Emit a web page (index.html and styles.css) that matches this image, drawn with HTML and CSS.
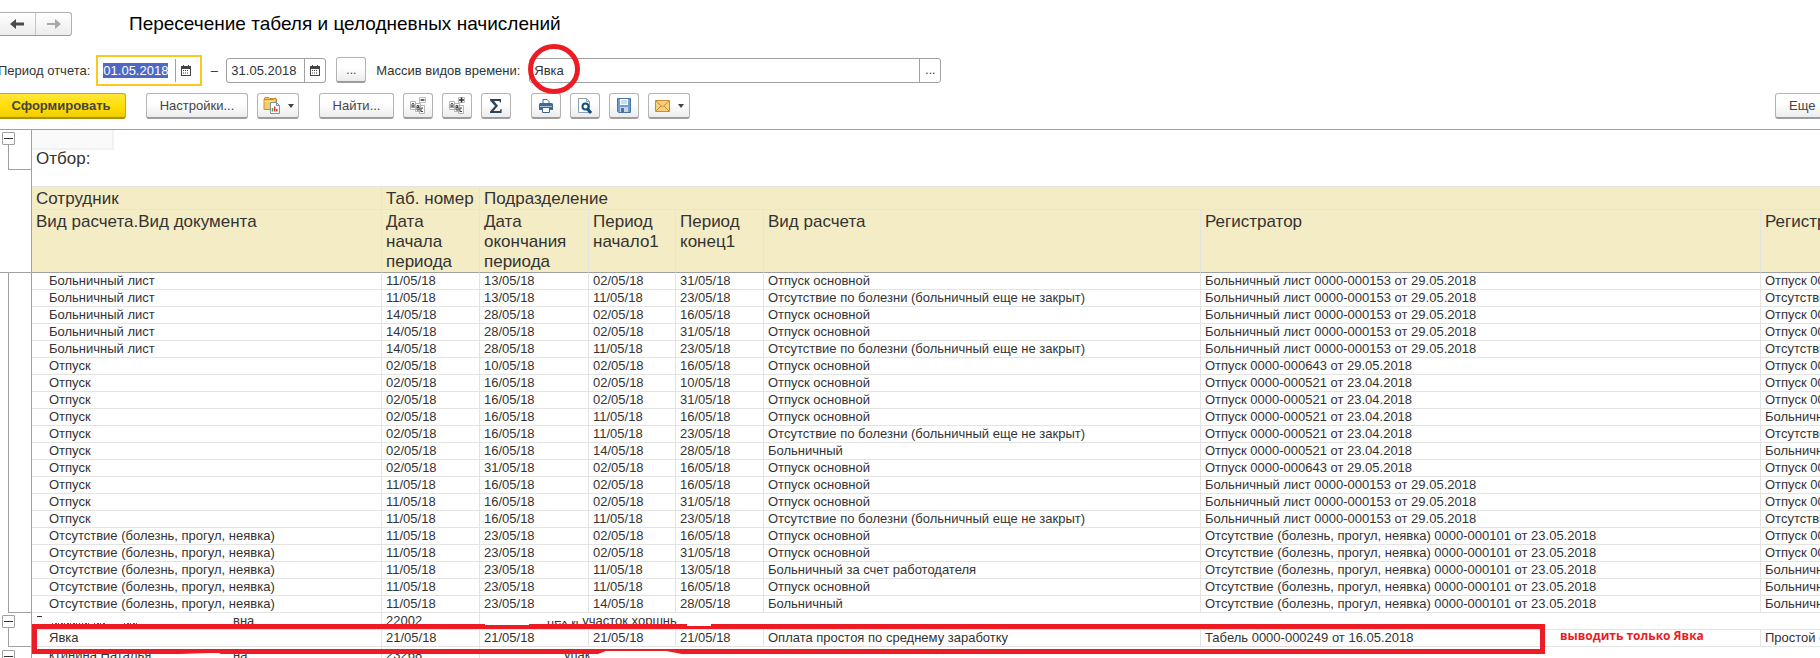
FILE: index.html
```
<!DOCTYPE html>
<html lang="ru">
<head>
  <meta charset="UTF-8">
  <meta name="viewport" content="width=device-width, initial-scale=1.0">
  <title>Пересечение табеля и целодневных начислений</title>
  <link rel="stylesheet" href="styles.css">
</head>
<body>

  <header class="title-bar">
    <div class="nav">
      <button type="button" aria-label="Назад">
        <svg width="14" height="12" viewBox="0 0 14 12"><path d="M0 6l6-5v3.500h8v3H6V11z" fill="#4a4a4a"/></svg>
      </button>
      <button type="button" aria-label="Вперед">
        <svg width="14" height="12" viewBox="0 0 14 12"><path d="M14 6L8 1v4H0v2h8v4z" fill="#a9a9a9"/></svg>
      </button>
    </div>
    <h1>Пересечение табеля и целодневных начислений</h1>
  </header>

  <div class="params">
    <label for="date-from">Период отчета:</label>
    <div class="field date active">
      <input id="date-from" type="text" value="01.05.2018">
      <button type="button" aria-label="Выбрать дату начала">
        <svg width="10" height="11" viewBox="0 0 10 11"><path d="M0 1h10v10H0z" fill="#444"/><path d="M1 4h8v6H1z" fill="#fff"/><path d="M2 0h1v2H2zM7 0h1v2H7z" fill="#444"/><path d="M2 5.500h6M2 8h6" stroke="#444" stroke-dasharray="1 1"/></svg>
      </button>
    </div>
    <label class="dash" for="date-to">–</label>
    <div class="field date">
      <input id="date-to" type="text" value="31.05.2018">
      <button type="button" aria-label="Выбрать дату окончания">
        <svg width="10" height="11" viewBox="0 0 10 11"><path d="M0 1h10v10H0z" fill="#444"/><path d="M1 4h8v6H1z" fill="#fff"/><path d="M2 0h1v2H2zM7 0h1v2H7z" fill="#444"/><path d="M2 5.500h6M2 8h6" stroke="#444" stroke-dasharray="1 1"/></svg>
      </button>
    </div>
    <button type="button" class="btn icon dots">...</button>
    <label class="kinds-label" for="kinds">Массив видов времени:</label>
    <div class="field kinds">
      <input id="kinds" type="text" value="Явка">
      <button type="button" class="dots">...</button>
      <svg class="circle" width="52" height="50" viewBox="0 0 52 50"><ellipse cx="26" cy="25" rx="23.500" ry="22.500" fill="none" stroke="#ed1c24" stroke-width="5"/></svg>
    </div>
  </div>

  <div class="toolbar">
    <div class="group">
      <button type="button" class="btn primary">Сформировать</button>
    </div>
    <div class="group">
      <button type="button" class="btn settings">Настройки...</button>
      <button type="button" class="btn menu" aria-label="Варианты отчета">
        <svg width="17" height="17" viewBox="0 0 17 17"><path d="M1 2.500l1-2h4l1 1h6v4M1 2.500h9l2-1.500 1.500 1v9l-2 1.500H1z" fill="#f3cd6c" stroke="#c58f2c"/><path d="M1.500 4.500h9v8" fill="none" stroke="#fbe6a8"/><path d="M7.500 5.500h6l3 3v8h-9z" fill="#fff" stroke="#7d8fa0"/><path d="M13.500 5.500v3h3" fill="none" stroke="#7d8fa0"/><path d="M9.500 11v3.500" stroke="#3aa655" stroke-width="1.500"/><path d="M11.700 9.500v5" stroke="#e8322b" stroke-width="1.500"/><path d="M13.800 12v2.500" stroke="#e8322b" stroke-width="1.500"/></svg>
        <svg width="6" height="4" viewBox="0 0 6 4"><path d="M0 0h6L3 4z" fill="#444"/></svg>
      </button>
    </div>
    <div class="group">
      <button type="button" class="btn find">Найти...</button>
      <button type="button" class="btn icon" aria-label="Свернуть группы">
        <svg width="16" height="17" viewBox="0 0 16 17"><path d="M.5 4.500h5v8h-5zM5.500 6.500h5v8h-5zM9.500 8.500h5v8h-5z" fill="#fff" stroke="#b4b4b4"/><path d="M2 11V7.500l1-1.500 1 1.500V11M2 9h2M7 13V8.500h1.500v2H7h2V13H7M13 11h-2v3.500h2" fill="none" stroke="#444"/><path d="M9.500.5h6v5h-6z" fill="#fff" stroke="#bbb"/><path d="M10.500 3h4" stroke="#333" stroke-width="1.500"/></svg>
      </button>
      <button type="button" class="btn icon" aria-label="Развернуть группы">
        <svg width="16" height="17" viewBox="0 0 16 17"><path d="M.5 4.500h5v8h-5zM5.500 6.500h5v8h-5zM9.500 8.500h5v8h-5z" fill="#fff" stroke="#b4b4b4"/><path d="M2 11V7.500l1-1.500 1 1.500V11M2 9h2M7 13V8.500h1.500v2H7h2V13H7M13 11h-2v3.500h2" fill="none" stroke="#444"/><path d="M9.500.5h6v5h-6z" fill="#fff" stroke="#bbb"/><path d="M10 3h5M12.500.5v5" stroke="#333" stroke-width="1.500"/></svg>
      </button>
      <button type="button" class="btn icon" aria-label="Сумма">
        <svg width="12" height="14" viewBox="0 0 12 14"><path d="M0 0h11v3.500h-1L9.500 2H4l4 4.800L3.500 12H10l.6-2h1v4H0v-1.500L5 7 0 1.500z" fill="#2e4559"/></svg>
      </button>
    </div>
    <div class="group">
      <button type="button" class="btn icon" aria-label="Печать">
        <svg width="14" height="14" viewBox="0 0 14 14"><path d="M4 5V.5h4l2 2V5" fill="#fff" stroke="#3b6588"/><path d="M1 4h12l1 1v6H0V5z" fill="#3f6c92"/><path d="M1 7.500h12" stroke="#a9c4da"/><path d="M3.500 8.500h7v5h-7z" fill="#fff" stroke="#3b6588"/></svg>
      </button>
      <button type="button" class="btn icon" aria-label="Предварительный просмотр">
        <svg width="14" height="16" viewBox="0 0 14 16"><path d="M.5.5h8l3 3v11H.5z" fill="#fff" stroke="#8fa1b0"/><path d="M8.500.5v3h3" fill="none" stroke="#8fa1b0"/><circle cx="7.500" cy="8.500" r="3" fill="#fff" stroke="#14507f" stroke-width="2"/><path d="M9.500 11l3.500 4" stroke="#14507f" stroke-width="3"/></svg>
      </button>
      <button type="button" class="btn icon" aria-label="Сохранить">
        <svg width="14" height="15" viewBox="0 0 14 15"><path d="M.5.5h13v14h-12l-1-1z" fill="#6f9fd0" stroke="#4775a3"/><path d="M3 1h8v6H3z" fill="#fff"/><path d="M4 3h6M4 5h6" stroke="#9bb8d4"/><path d="M3 9h8v5H3z" fill="#c9d3dc"/><path d="M4 10h3v4H4z" fill="#4775a3"/></svg>
      </button>
      <button type="button" class="btn menu" aria-label="Отправить по почте">
        <svg width="15" height="12" viewBox="0 0 15 12"><path d="M.5.5h14v11H.5z" fill="#f7cf80" stroke="#c98d2b"/><path d="M1 1l6.500 6L14 1M1 11l5-5M14 11L9 6" fill="none" stroke="#c98d2b"/></svg>
        <svg width="6" height="4" viewBox="0 0 6 4"><path d="M0 0h6L3 4z" fill="#444"/></svg>
      </button>
    </div>
    <button type="button" class="btn more">Еще</button>
  </div>

  <main class="report">
    <div class="tree">
      <div class="tree-head">
        <button type="button" class="toggle" aria-label="Свернуть отбор"></button>
        <div class="branch"></div>
      </div>
      <div class="branch long"></div>
      <button type="button" class="toggle" aria-label="Свернуть сотрудника"></button>
      <div class="branch short"></div>
      <button type="button" class="toggle" aria-label="Свернуть сотрудника"></button>
    </div>

    <div class="sheet">
      <div class="filter">
        <div class="active-cell"></div>
        <p>Отбор:</p>
      </div>
      <table>
        <colgroup>
          <col class="c-name"><col class="c-start"><col class="c-end"><col class="c-p1">
          <col class="c-p2"><col class="c-kind"><col class="c-reg"><col>
        </colgroup>
        <thead>
          <tr class="h-top"><th>Сотрудник</th><th>Таб. номер</th><th colspan="6">Подразделение</th></tr>
          <tr class="h-main">
            <th>Вид расчета.Вид документа</th>
            <th>Дата<br>начала<br>периода</th>
            <th>Дата<br>окончания<br>периода</th>
            <th>Период<br>начало1</th>
            <th>Период<br>конец1</th>
            <th>Вид расчета</th>
            <th>Регистратор</th>
            <th>Регистратор1</th>
          </tr>
        </thead>
        <tbody id="rows"></tbody>
        <tbody>
          <tr class="person">
            <td>
              <svg class="scrap" width="110" height="12" viewBox="0 0 110 12"><path d="M1 1.500h5" stroke="#333"/><path d="M16 9h28M46 9h8M58 9h12M72 10h6M88 9h14" stroke="#555" stroke-width="2" stroke-dasharray="1 2 2 1"/></svg>
              <span class="name-end">вна</span>
            </td>
            <td>22002</td>
            <td colspan="6" class="dept"><span class="wiped">цех и</span> <span class="cut">участок</span> <span class="cut">хоршнь</span></td>
          </tr>
          <tr>
            <td class="marked">Явка
              <svg class="frame" width="1513" height="30" viewBox="0 0 1513 30">
                <path d="M2.500 2.500h1508v25H2.500z" fill="none" stroke="#ed1c24" stroke-width="5"/>
                <path d="M453 0h44v1h-44zM655 0h24v2h-24zM147 30l30-1h10l2 1zM566 30l8-3h60l16 3z" fill="#fff"/>
              </svg>
              <strong class="note">выводить только Явка</strong>
            </td>
            <td>21/05/18</td><td>21/05/18</td><td>21/05/18</td><td>21/05/18</td>
            <td>Оплата простоя по среднему заработку</td>
            <td>Табель 0000-000249 от 16.05.2018</td>
            <td>Простой сотрудника</td>
          </tr>
          <tr class="person">
            <td>ктинина Наталья<span class="name-end">на</span></td>
            <td>23268</td>
            <td colspan="6"><span class="pack">упак</span></td>
          </tr>
        </tbody>
      </table>
    </div>
  </main>

  <script>
    const B = 'Больничный лист';
    const O = 'Отпуск';
    const N = 'Отсутствие (болезнь, прогул, неявка)';
    const main = 'Отпуск основной';
    const sick = 'Отсутствие по болезни (больничный еще не закрыт)';
    const b153 = 'Больничный лист 0000-000153 от 29.05.2018';
    const o643 = 'Отпуск 0000-000643 от 29.05.2018';
    const o521 = 'Отпуск 0000-000521 от 23.04.2018';
    const n101 = N + ' 0000-000101 от 23.05.2018';

    const rows = [
      [B, '11/05/18', '13/05/18', '02/05/18', '31/05/18', main, b153, o643],
      [B, '11/05/18', '13/05/18', '11/05/18', '23/05/18', sick, b153, n101],
      [B, '14/05/18', '28/05/18', '02/05/18', '16/05/18', main, b153, o521],
      [B, '14/05/18', '28/05/18', '02/05/18', '31/05/18', main, b153, o643],
      [B, '14/05/18', '28/05/18', '11/05/18', '23/05/18', sick, b153, n101],
      [O, '02/05/18', '10/05/18', '02/05/18', '16/05/18', main, o643, o521],
      [O, '02/05/18', '16/05/18', '02/05/18', '10/05/18', main, o521, o643],
      [O, '02/05/18', '16/05/18', '02/05/18', '31/05/18', main, o521, o643],
      [O, '02/05/18', '16/05/18', '11/05/18', '16/05/18', main, o521, b153],
      [O, '02/05/18', '16/05/18', '11/05/18', '23/05/18', sick, o521, n101],
      [O, '02/05/18', '16/05/18', '14/05/18', '28/05/18', 'Больничный', o521, b153],
      [O, '02/05/18', '31/05/18', '02/05/18', '16/05/18', main, o643, o521],
      [O, '11/05/18', '16/05/18', '02/05/18', '16/05/18', main, b153, o521],
      [O, '11/05/18', '16/05/18', '02/05/18', '31/05/18', main, b153, o643],
      [O, '11/05/18', '16/05/18', '11/05/18', '23/05/18', sick, b153, n101],
      [N, '11/05/18', '23/05/18', '02/05/18', '16/05/18', main, n101, o521],
      [N, '11/05/18', '23/05/18', '02/05/18', '31/05/18', main, n101, o643],
      [N, '11/05/18', '23/05/18', '11/05/18', '13/05/18', 'Больничный за счет работодателя', n101, b153],
      [N, '11/05/18', '23/05/18', '11/05/18', '16/05/18', main, n101, b153],
      [N, '11/05/18', '23/05/18', '14/05/18', '28/05/18', 'Больничный', n101, b153]
    ];

    document.getElementById('rows').innerHTML = rows
      .map(r => '<tr>' + r.map(c => `<td>${c}</td>`).join('') + '</tr>')
      .join('');

    // the first date is ready for typing
    const dateFrom = document.getElementById('date-from');
    dateFrom.focus();
    dateFrom.select();
  </script>

</body>
</html>
```
FILE: styles.css
```
* {
  margin: 0;
  padding: 0;
  box-sizing: border-box;
}

body {
  font-family: "Liberation Sans", Arial, sans-serif;
  font-size: 13px;
  color: #333;
  background: #fff;
  height: 100vh;
  overflow: hidden;
}

button,
input {
  font: inherit;
  color: inherit;
}

svg {
  display: block;
}

/* Title */
.title-bar {
  display: flex;
  align-items: center;
  gap: 57px;
  height: 47px;
}

.nav {
  display: flex;
  margin-left: -2px;
  border: 1px solid #b0b0b0;
  border-bottom-color: #999;
  border-radius: 3px;
  background: linear-gradient(#fff, #ececec);
}

.nav button {
  display: flex;
  align-items: center;
  justify-content: center;
  width: 36px;
  height: 22px;
  border: none;
  background: none;
}

.nav button + button {
  border-left: 1px solid #c4c4c4;
}

h1 {
  font-size: 19px;
  font-weight: normal;
  color: #000;
}

/* Report parameters */
.params {
  display: flex;
  align-items: center;
  height: 46px;
  margin-left: -2px;
}

.field {
  display: flex;
  height: 25px;
  border: 1px solid #a0a0a0;
  border-radius: 3px;
  background: #fff;
}

.field input {
  flex: 1;
  min-width: 0;
  border: none;
  outline: none;
  background: none;
  padding-left: 4px;
}

.field input::selection {
  background: #4f68c4;
  color: #fff;
}

.field button {
  display: flex;
  align-items: center;
  justify-content: center;
  width: 21px;
  border: none;
  border-left: 1px solid #a0a0a0;
  background: none;
}

.date {
  width: 100px;
}

.date.active {
  width: 106px;
  height: 31px;
  margin-left: 6px;
  padding: 2px 1px 2px 0;
  border: 2px solid #fcc81e;
  border-radius: 0;
}

.date.active input {
  padding-left: 5px;
}

.date.active button {
  width: 24px;
  padding-right: 4px;
}

.dash {
  width: 24px;
  text-align: center;
}

.params .btn {
  margin: 0 10px;
}

.kinds-label {
  width: 153px;
}

.kinds {
  position: relative;
  width: 412px;
}

.circle {
  position: absolute;
  left: -2px;
  top: -15px;
}

/* Buttons */
.btn {
  height: 26px;
  border: 1px solid #b4b4b4;
  border-bottom: 2px solid #9c9c9c;
  border-radius: 3px;
  background: linear-gradient(#fff 40%, #ececec);
  color: #444;
  white-space: nowrap;
}

.btn.icon,
.btn.menu {
  display: flex;
  align-items: center;
  justify-content: center;
  width: 30px;
}

.btn.menu {
  width: 42px;
  gap: 8px;
}

.dots {
  font-size: 12px;
}

.toolbar {
  display: flex;
  gap: 20px;
  height: 36px;
}

.group {
  display: flex;
  gap: 9px;
}

.primary {
  width: 130px;
  margin-left: -4px;
  border-color: #c9ae00 #c9ae00 #a89200;
  background: linear-gradient(#ffe63c, #ffdd00 60%, #f0cc00);
  font-weight: bold;
}

.settings {
  width: 102px;
}

.find {
  width: 75px;
}

.more {
  width: 70px;
  margin-left: auto;
  margin-right: -25px;
  padding-left: 13px;
  text-align: left;
}

/* Report */
.report {
  display: flex;
  border-top: 1px solid #a0a0a0;
}

.tree {
  width: 32px;
  border-right: 1px solid #a0a0a0;
}

.tree-head {
  height: 143px;
  padding-top: 2px;
  border-bottom: 1px solid #a0a0a0;
}

.toggle {
  display: block;
  width: 13px;
  height: 13px;
  margin-left: 2px;
  border: 1px solid #a0a0a0;
  border-radius: 1px;
  background: linear-gradient(#333, #333) center / 9px 1px no-repeat #fff;
}

.branch {
  height: 25px;
  margin-left: 8px;
  border-left: 1px solid #a0a0a0;
  border-bottom: 1px solid #a0a0a0;
}

.branch.long {
  height: 340px;
  margin-bottom: 2px;
}

.branch.short {
  height: 19px;
  margin-bottom: 3px;
}

.sheet {
  flex: 1;
  min-width: 0;
}

.filter {
  height: 56px;
  font-size: 17px;
}

.filter p {
  padding-left: 4px;
  line-height: 18px;
}

.active-cell {
  width: 82px;
  height: 20px;
  border: solid #f1f1f1;
  border-width: 0 2px 2px 0;
  background: #fafafa;
}

table {
  width: 100%;
  table-layout: fixed;
  border-collapse: separate;
  border-spacing: 0;
  border-top: 1px solid #e4e4e4;
}

.c-name { width: 350px; }
.c-start { width: 98px; }
.c-end { width: 109px; }
.c-p1 { width: 87px; }
.c-p2 { width: 88px; }
.c-kind { width: 437px; }
.c-reg { width: 560px; }

th,
td {
  border-right: 1px solid #e4e4e4;
  border-bottom: 1px solid #e4e4e4;
  padding-left: 4px;
  text-align: left;
  vertical-align: top;
  white-space: nowrap;
}

th:last-child,
td:last-child {
  border-right: none;
}

th {
  font-size: 17px;
  font-weight: normal;
  line-height: 20px;
  background: #f4ecc5;
}

.h-top th {
  height: 23px;
  padding-top: 2px;
}

.h-main th {
  height: 63px;
  padding-top: 2px;
  border-bottom-color: #a0a0a0;
}

td {
  height: 17px;
  line-height: 16px;
}

td:first-child {
  padding-left: 17px;
}

.person td {
  position: relative;
}

/* Leftovers of the wiped names */
.scrap {
  position: absolute;
  left: 4px;
  top: 2px;
}

.name-end {
  position: absolute;
  left: 201px;
}

.person .dept {
  padding-left: 67px;
}

.wiped,
.cut {
  display: inline-block;
  height: 16px;
  vertical-align: top;
  clip-path: inset(8px 0 0 0);
}

.cut {
  clip-path: inset(5px 0 0 0);
}

.pack {
  padding-left: 80px;
}

/* Red marker over the row */
.marked {
  position: relative;
}

.frame {
  position: absolute;
  left: 0;
  top: -6px;
  z-index: 1;
}

.note {
  position: absolute;
  left: 1528px;
  top: -2px;
  font-family: "Open Sans", Tahoma, sans-serif;
  font-size: 12px;
  color: #ed1c24;
}
```
